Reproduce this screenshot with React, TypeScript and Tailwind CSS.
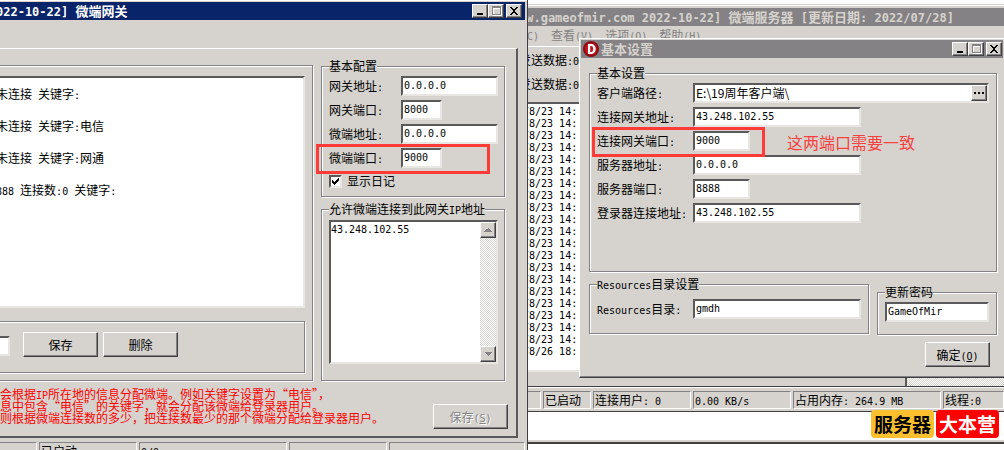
import { Fragment } from "react";
import clsx from "clsx";

// ── Classic 3D edges ──
const RAISED =
  "border border-t-white border-l-white border-r-[#404040] border-b-[#404040] shadow-[inset_-1px_-1px_0_#848284] bg-[#d6d3ce]";
const SUNKEN =
  "border-2 border-t-[#5a5a5a] border-l-[#5a5a5a] border-r-[#e8e6e2] border-b-[#e8e6e2] bg-white";
const GROOVE =
  "border border-[#848284] shadow-[1px_1px_0_#fff,inset_1px_1px_0_#fff]";
const CELL =
  "h-[18px] shrink-0 border border-t-[#848284] border-l-[#848284] border-r-white border-b-white pl-px leading-4 whitespace-pre overflow-hidden";
const DITHER =
  "bg-[repeating-conic-gradient(#fff_0_25%,#d6d3ce_0_50%)] bg-[length:2px_2px]";
const MONO = "font-['DejaVu_Sans_Mono','Noto_Sans_CJK_SC',monospace]";

// ASCII runs are half the width of a Chinese glyph
const Mixed = ({ text, title }: { text: string; title?: boolean }) => (
  <>
    {text.split(/([\x20-\x7e]+)/).map((part, i) =>
      i % 2 ? (
        <span key={i} className={clsx(MONO, "leading-none", title ? "text-[12px]" : "text-[10px]")}>
          {part}
        </span>
      ) : (
        <Fragment key={i}>{part}</Fragment>
      ),
    )}
  </>
);

const gatewayFields = [
  { id: "gw-addr", label: "网关地址:", value: "0.0.0.0", width: "w-[97px]" },
  { id: "gw-port", label: "网关端口:", value: "8000", width: "w-[41px]" },
  { id: "wd-addr", label: "微端地址:", value: "0.0.0.0", width: "w-[97px]" },
  { id: "wd-port", label: "微端端口:", value: "9000", width: "w-[41px]" },
];

const serverFields = [
  { id: "link-addr", label: "连接网关地址:", value: "43.248.102.55", width: "w-[168px]" },
  { id: "link-port", label: "连接网关端口:", value: "9000", width: "w-[57px]" },
  { id: "srv-addr", label: "服务器地址:", value: "0.0.0.0", width: "w-[168px]" },
  { id: "srv-port", label: "服务器端口:", value: "8888", width: "w-[57px]" },
  { id: "login-addr", label: "登录器连接地址:", value: "43.248.102.55", width: "w-[168px]" },
];

const connections = [
  "未连接 关键字:",
  "未连接 关键字:电信",
  "未连接 关键字:网通",
  "888 连接数:0 关键字:",
];

const hints = [
  "会根据IP所在地的信息分配微端。例如关键字设置为“电信”，",
  "息中包含“电信”的关键字，就会分配该微端给登录器用户。",
  "则根据微端连接数的多少，把连接数最少的那个微端分配给登录器用户。",
];

const logLines = [...Array(20).fill("/8/23 14:"), "/8/26 18:"];

const statusCells = [
  { text: "", width: "w-[22px]" },
  { text: "已启动", width: "w-[48px]" },
  { text: "连接用户: 0", width: "w-[98px]" },
  { text: "0.00 KB/s", width: "w-[98px]" },
  { text: "占用内存: 264.9 MB", width: "w-[148px]" },
  { text: "线程:0", width: "grow" },
];

const TextBox = ({ id, value, className }: { id: string; value: string; className: string }) => (
  <input
    id={id}
    type="text"
    defaultValue={value}
    className={clsx(SUNKEN, MONO, "h-5 px-px pb-[2px] text-[10px] leading-4 outline-none", className)}
  />
);

const CaptionButtons = () => (
  <div className="flex">
    <button aria-label="最小化" className={clsx(RAISED, "flex h-[14px] w-4 justify-center")}>
      <svg width="12" height="12" shapeRendering="crispEdges">
        <path d="M3 8h6v2h-6z" fill="#000" />
      </svg>
    </button>
    <button aria-label="最大化" disabled className={clsx(RAISED, "flex h-[14px] w-4 justify-center")}>
      <svg width="12" height="12" shapeRendering="crispEdges">
        <path d="M3 2h9v9h-9z M4 4v6h7v-6z" fill="#fff" fillRule="evenodd" />
        <path d="M2 1h9v9h-9z M3 3v6h7v-6z" fill="#848284" fillRule="evenodd" />
      </svg>
    </button>
    <button aria-label="关闭" className={clsx(RAISED, "ml-[2px] flex h-[14px] w-4 justify-center")}>
      <svg width="12" height="12" shapeRendering="crispEdges">
        <path
          d="M2 2h2v1h1v1h2v-1h1v-1h2v1h-1v1h-1v1h-1v2h1v1h1v1h1v1h-2v-1h-1v-1h-2v1h-1v1h-2v-1h1v-1h1v-1h1v-2h-1v-1h-1v-1h-1z"
          fill="#000"
        />
      </svg>
    </button>
  </div>
);

const ScrollArrow = ({ down }: { down?: boolean }) => (
  <button
    aria-label={down ? "向下滚动" : "向上滚动"}
    className={clsx(RAISED, "flex size-4 items-center justify-center")}
  >
    <svg width="8" height="6" shapeRendering="crispEdges">
      <path d={down ? "M1 1h7v1h-1v1h-1v1h-1v1h-1v-1h-1v-1h-1v-1h-1z" : "M4 1h1v1h1v1h1v1h1v1h-8v-1h1v-1h1v-1h1z"} fill="#848284" />
    </svg>
  </button>
);

const GatewayWindow = () => (
  <section className="absolute top-0 -left-1 w-[532px] border-r border-[#404040] bg-[#d6d3ce] pt-[2px] shadow-[inset_0_1px_0_#fff]">
    <header className="mr-[2px] flex h-[18px] items-center justify-between bg-[#0a246a] pr-[3px] text-white">
      <h1 className="text-[13px] leading-[18px] font-bold whitespace-pre">
        <Mixed title text="022-10-22] 微端网关" />
      </h1>
      <CaptionButtons />
    </header>

    <div className="mt-7 mr-[9px] border-t border-r-2 border-b-2 border-t-white border-r-[#5a5a5a] border-b-[#5a5a5a] pt-[9px] pb-[7px]">
      <div className="flex gap-2 pr-[11px]">
        {/* ── Connections ── */}
        <div className="mt-[7px] flex grow flex-col border-y border-r border-[#848284] pt-[10px] pr-[7px] shadow-[1px_1px_0_#fff,inset_0_1px_0_#fff]">
          <ul className={clsx(SUNKEN, "h-[232px] border-l-0 leading-8 whitespace-pre")}>
            {connections.map((line, i) => (
              <li key={i} className="h-8">
                <Mixed text={line} />
              </li>
            ))}
          </ul>
          <div className="mt-[13px] flex h-[52px] border-y border-r border-[#848284] pt-[10px] shadow-[1px_1px_0_#fff,inset_0_1px_0_#fff]">
            <input aria-label="关键字" type="text" className={clsx(SUNKEN, "mt-1 mr-[13px] h-5 w-[14px] border-l-0")} />
            <button className={clsx(RAISED, "mr-[5px] h-[25px] w-[75px]")}>保存</button>
            <button className={clsx(RAISED, "h-[25px] w-[75px]")}>删除</button>
          </div>
        </div>

        <div className="flex w-[184px] flex-col gap-1">
          <fieldset className={clsx(GROOVE, "min-w-0 pr-[6px] pb-[6px] pl-[7px]")}>
            <legend className="h-4 bg-[#d6d3ce] leading-4">基本配置</legend>
            <div className="flex flex-col gap-1 pt-[2px]">
              {gatewayFields.map((f) => (
                <div key={f.id} className="flex h-5 items-center">
                  <label htmlFor={f.id} className="h-5 w-[72px] leading-5">
                    <Mixed text={f.label} />
                  </label>
                  <TextBox id={f.id} value={f.value} className={f.width} />
                </div>
              ))}
              <label className="flex h-[18px] items-center gap-[5px]">
                <span className={clsx(SUNKEN, "relative size-[13px]")}>
                  <input type="checkbox" defaultChecked className="peer absolute inset-0 size-full appearance-none" />
                  <svg
                    width="9"
                    height="9"
                    shapeRendering="crispEdges"
                    className="pointer-events-none absolute inset-0 hidden peer-checked:block"
                  >
                    <path d="M1 3h1v1h1v1h1v-1h1v-1h1v-1h1v-1h1v3h-1v1h-1v1h-1v1h-1v1h-1v-1h-1v-1h-1z" />
                  </svg>
                </span>
                显示日记
              </label>
            </div>
          </fieldset>

          <fieldset className={clsx(GROOVE, "min-w-0 pr-[6px] pb-4 pl-[7px]")}>
            <legend className="h-4 bg-[#d6d3ce] leading-4">
              <Mixed text="允许微端连接到此网关IP地址" />
            </legend>
            <div className={clsx(SUNKEN, "mt-[3px] flex h-[144px]")}>
              <textarea
                aria-label="允许微端连接到此网关IP地址"
                defaultValue="43.248.102.55"
                className={clsx(MONO, "min-w-0 grow resize-none overflow-hidden text-[10px] leading-4 outline-none")}
              />
              <div className={clsx(DITHER, "flex w-4 flex-col justify-between")}>
                <ScrollArrow />
                <ScrollArrow down />
              </div>
            </div>
          </fieldset>
        </div>
      </div>

      <div className="flex items-end justify-between pr-2 pl-1">
        <ul className="mt-[7px] mb-[5px] leading-3 whitespace-nowrap text-[#ff0000]">
          {hints.map((hint) => (
            <li key={hint} className="h-3">
              <Mixed text={hint} />
            </li>
          ))}
        </ul>
        <button disabled className={clsx(RAISED, "h-[25px] w-[75px] text-[#848284] [text-shadow:1px_1px_0_#fff]")}>
          <Mixed text="保存(" />
          <u>
            <Mixed text="S" />
          </u>
          <Mixed text=")" />
        </button>
      </div>
    </div>

    <footer className="mt-1 flex gap-[2px] pr-[2px]">
      <div className={clsx(CELL, "w-[41px] border-l-0")} />
      <div className={clsx(CELL, "w-[98px]")}>已启动</div>
      <div className={clsx(CELL, "w-[148px]")}>
        <Mixed text="0/0" />
      </div>
      <div className={clsx(CELL, "w-[98px]")} />
      <div className={clsx(CELL, "grow")} />
    </footer>
  </section>
);

const ServerWindow = () => (
  <section className="absolute top-1 right-0 left-[519px] border-t border-b border-t-[#d6d3ce] border-b-[#404040] bg-[#d6d3ce] pt-[3px] shadow-[inset_0_1px_0_#fff]">
    <header className="h-[18px] bg-[#848284] text-[#d6d3ce]">
      <h1 className="text-[13px] leading-[18px] font-bold whitespace-pre">
        <Mixed title text="ww.gameofmir.com 2022-10-22] 微端服务器 [更新日期: 2022/07/28]" />
      </h1>
    </header>
    <nav className="flex h-5 items-start gap-3 pl-[2px] leading-[18px] text-[#848284]">
      {["(C)", "查看(V)", "选项(O)", "帮助(H)"].map((item) => (
        <button key={item} disabled>
          <Mixed text={item} />
        </button>
      ))}
    </nav>
    <div className="flex h-14 flex-col border-t border-white pt-px leading-6 whitespace-pre">
      <span className="h-6">
        <Mixed text="发送数据:0" />
      </span>
      <span className="h-6">
        <Mixed text="发送数据:0" />
      </span>
    </div>
    <ol className={clsx(SUNKEN, MONO, "h-[270px] border-x-0 pt-[2px] pl-1 text-[10px] leading-3")}>
      {logLines.map((line, i) => (
        <li key={i}>{line}</li>
      ))}
    </ol>
    <div className="flex h-[15px] border-b border-[#404040]">
      <div className="w-[80%] border-r-2 border-[#5a5a5a]" />
      <div className={clsx(DITHER, "grow")} />
    </div>
    <footer className="flex gap-[2px] border-t border-white pt-[3px] pb-[2px]">
      {statusCells.map((cell, i) => (
        <div key={i} className={clsx(CELL, cell.width)}>
          <Mixed text={cell.text} />
        </div>
      ))}
    </footer>
  </section>
);

const SettingsDialog = () => (
  <section className="absolute top-[38px] -right-px left-[579px] border border-t-white border-l-white border-r-[#404040] border-b-[#404040] bg-[#d6d3ce] p-px shadow-[inset_0_-1px_0_#848284]">
    <header className="flex h-[18px] items-center bg-[#848284] pr-px pl-[2px] text-[#d6d3ce]">
      <svg width="16" height="16" viewBox="0 0 16 16">
        <circle cx="8" cy="8" r="8" fill="#8e0d14" />
        <circle cx="8" cy="8" r="6" fill="#c21620" />
        <path d="M5 3h3.5a4 4.8 0 0 1 0 10H5z M7.2 5v6h1a2 3 0 0 0 0-6z" fill="#fff" fillRule="evenodd" />
      </svg>
      <h2 className="grow pl-[2px] text-[13px] leading-[18px] font-bold">基本设置</h2>
      <CaptionButtons />
    </header>

    <div className="pt-[7px] pr-[6px] pb-[9px] pl-2">
      <fieldset className={clsx(GROOVE, "h-[207px] min-w-0 px-[7px]")}>
        <legend className="h-4 bg-[#d6d3ce] leading-4">基本设置</legend>
        <div className="flex flex-col gap-1 pt-[2px]">
          <div className="flex h-5 items-center">
            <label htmlFor="client-path" className="h-5 w-24 leading-5">
              <Mixed text="客户端路径:" />
            </label>
            <div className={clsx(SUNKEN, "flex h-5 grow")}>
              <input
                id="client-path"
                type="text"
                defaultValue="E:\19周年客户端\"
                className="min-w-0 grow px-px text-[12px] leading-4 outline-none"
              />
              <button aria-label="浏览" className={clsx(RAISED, "flex size-4 items-center justify-center")}>
                <svg width="12" height="4" shapeRendering="crispEdges">
                  <path d="M1 1h2v2h-2z M5 1h2v2h-2z M9 1h2v2h-2z" />
                </svg>
              </button>
            </div>
          </div>
          {serverFields.map((f) => (
            <div key={f.id} className="flex h-5 items-center">
              <label htmlFor={f.id} className="h-5 w-24 leading-5 whitespace-nowrap">
                <Mixed text={f.label} />
              </label>
              <TextBox id={f.id} value={f.value} className={f.width} />
            </div>
          ))}
        </div>
      </fieldset>

      <div className="mt-1 flex items-end gap-2">
        <fieldset className={clsx(GROOVE, "mb-px min-w-0 grow px-[7px] pb-[14px]")}>
          <legend className="h-4 bg-[#d6d3ce] leading-4">
            <Mixed text="Resources目录设置" />
          </legend>
          <div className="flex items-center pt-[7px]">
            <label htmlFor="res-dir" className="h-5 w-24 shrink-0 leading-5">
              <Mixed text="Resources目录:" />
            </label>
            <TextBox id="res-dir" value="gmdh" className="w-[168px]" />
          </div>
        </fieldset>
        <fieldset className={clsx(GROOVE, "w-[120px] min-w-0 px-[7px] pb-3")}>
          <legend className="h-4 bg-[#d6d3ce] leading-4">
            <label htmlFor="update-pwd">更新密码</label>
          </legend>
          <div className="flex pt-[2px]">
            <TextBox id="update-pwd" value="GameOfMir" className="w-full" />
          </div>
        </fieldset>
      </div>

      <div className="mt-[7px] flex justify-end pr-[7px]">
        <button className={clsx(RAISED, "h-[25px] w-[65px]")}>
          <Mixed text="确定(" />
          <u>
            <Mixed text="O" />
          </u>
          <Mixed text=")" />
        </button>
      </div>
    </div>
  </section>
);

export default function App() {
  return (
    <main className="relative h-screen w-full overflow-hidden bg-white font-['Noto_Sans_CJK_SC',sans-serif] text-[12px] leading-4 text-black">
      <div className="absolute inset-x-0 top-0 h-[444px] border-b-2 border-[#404040] bg-white shadow-[inset_0_-2px_0_#d6d3ce]" />
      <ServerWindow />
      <SettingsDialog />
      <GatewayWindow />

      {/* ── Callouts over the two port fields ── */}
      <div className="pointer-events-none absolute top-[144px] left-[316px] h-[30px] w-[174px] border-3 border-[#ff3b38]" />
      <div className="pointer-events-none absolute top-[127px] left-[592px] h-[30px] w-[173px] border-3 border-[#ff3b38]" />
      <p className="absolute top-[130px] left-[787px] text-[16px] leading-6 text-[#f8413e]">这两端口需要一致</p>

      <div className="absolute right-[5px] bottom-3 flex gap-[2px] text-[19px] leading-7 font-bold">
        <span className="h-7 rounded-sm bg-[#fcc02e] px-[3px]">服务器</span>
        <span className="h-7 rounded-sm bg-[#ff0000] px-[3px] text-white">大本营</span>
      </div>
    </main>
  );
}
